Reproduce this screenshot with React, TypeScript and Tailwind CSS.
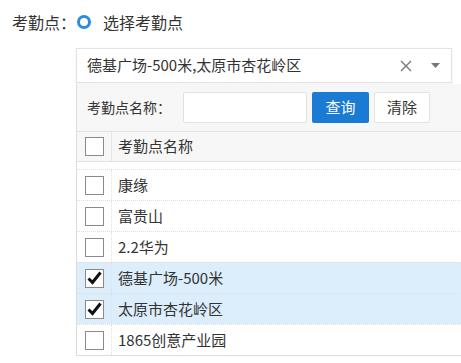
import { useState } from 'react';

const font = { fontFamily: '"Microsoft YaHei", "Noto Sans CJK SC", "Noto Sans", sans-serif' };

const initialRows = [
  { name: '康缘', checked: false },
  { name: '富贵山', checked: false },
  { name: '2.2华为', checked: false },
  { name: '德基广场-500米', checked: true },
  { name: '太原市杏花岭区', checked: true },
  { name: '1865创意产业园', checked: false },
];

function Checkbox({ checked }: { checked: boolean }) {
  return (
    <div className="w-[19px] h-[19px] border border-[#8a8a8a] bg-white flex items-center justify-center">
      {checked && (
        <svg width="15" height="14" viewBox="0 0 15 14">
          <path d="M1.5 7.5 L5.5 11.5 L13.5 1.5" fill="none" stroke="#111" strokeWidth="3" />
        </svg>
      )}
    </div>
  );
}

export default function App() {
  const [rows] = useState(initialRows);
  const selected = rows.filter((r) => r.checked).map((r) => r.name).join(',');

  return (
    <div className="w-[461px] h-[363px] bg-white overflow-hidden text-[#333]" style={font}>
      {/* Label + radio */}
      <div className="flex items-center h-[44px] pl-[12px]">
        <span className="text-[16px]">考勤点：</span>
        <span className="w-[14px] h-[14px] rounded-full border-[3px] border-[#2b8ae2] bg-white ml-[1px]" />
        <span className="text-[16px] ml-[12px]">选择考勤点</span>
      </div>

      <div className="ml-[76px] mt-[4px]">
        {/* Select box */}
        <div className="w-[376px] h-[35px] border border-[#e3e3e3] shadow-[0_1px_3px_rgba(0,0,0,0.08)] flex items-center pl-[10px] pr-[10px]">
          <span className="text-[15px] flex-1 truncate">{selected}</span>
          <svg width="12" height="12" viewBox="0 0 12 12" className="mr-[19px]">
            <path d="M1 1 L11 11 M11 1 L1 11" stroke="#777" strokeWidth="1.4" />
          </svg>
          <svg width="9" height="5" viewBox="0 0 9 5" className="mr-[1px]">
            <path d="M0 0 L9 0 L4.5 5 Z" fill="#777" />
          </svg>
        </div>

        {/* Dropdown panel */}
        <div className="w-[420px] mt-[1px] border-l border-b border-[#dcdcdc] bg-white">
          <div className="h-[47px] bg-[#f7f7f7] flex items-center pl-[10px]">
            <span className="text-[14px] w-[96px]">考勤点名称：</span>
            <div className="w-[124px] h-[31px] bg-white border border-[#e2e2e2] rounded-[2px]" />
            <button className="w-[57px] h-[31px] ml-[5px] bg-[#1a7ad4] text-white text-[15px] rounded-[2px]">
              查询
            </button>
            <button className="w-[56px] h-[31px] ml-[5px] bg-white border border-[#e2e2e2] text-[15px] rounded-[2px]">
              清除
            </button>
          </div>

          <div className="h-[31px] bg-[#f7f7f7] border-t border-b border-[#e2e2e2] flex items-center">
            <div className="w-[35px] h-full flex items-center justify-center pl-[1px] border-r border-[#e6e6e6]">
              <Checkbox checked={false} />
            </div>
            <span className="text-[15px] pl-[6px]">考勤点名称</span>
          </div>

          <div className="pt-[7px]">
            {rows.map((row) => (
              <div
                key={row.name}
                className={`h-[31px] flex items-center border-t border-dotted border-[#dedede] ${
                  row.checked ? 'bg-[#dcedfb]' : 'bg-white'
                }`}
              >
                <div className="w-[35px] h-full flex items-center justify-center pl-[1px] border-r border-dotted border-[#e0e0e0]">
                  <Checkbox checked={row.checked} />
                </div>
                <span className="text-[15px] pl-[6px]">{row.name}</span>
              </div>
            ))}
          </div>
        </div>
      </div>
    </div>
  );
}
